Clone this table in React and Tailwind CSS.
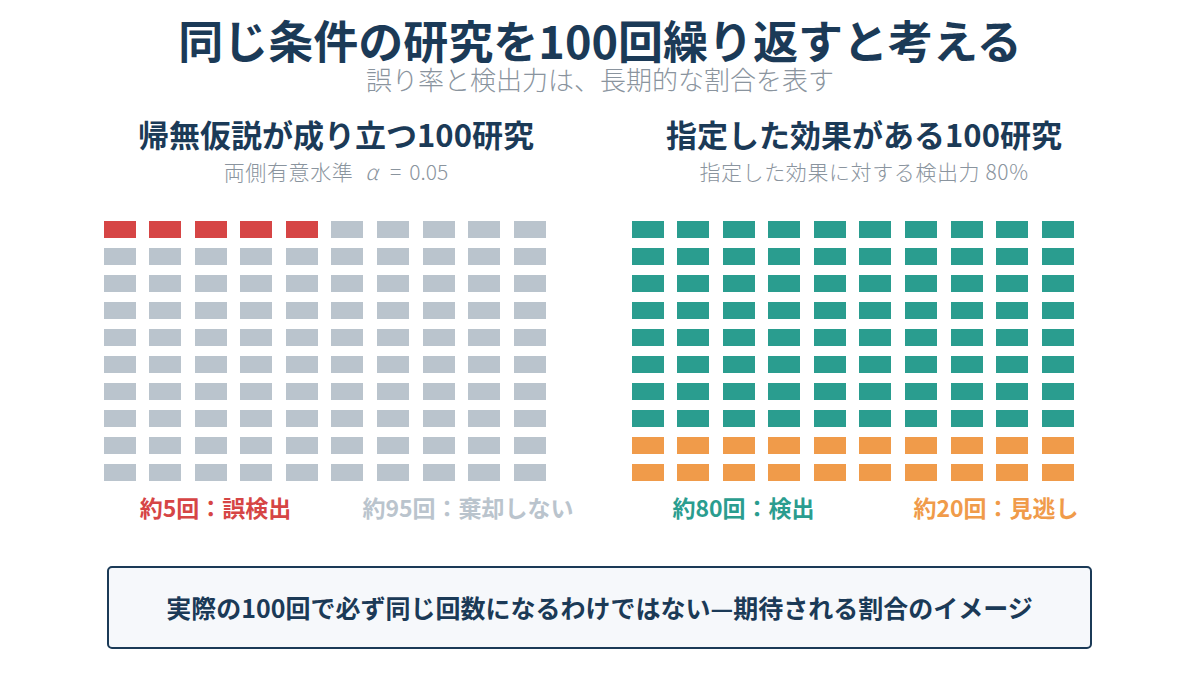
import React from "react";

const font = { fontFamily: '"Noto Sans CJK JP", "Noto Sans", sans-serif' };

function Cells({ colors }) {
  return (
    <div className="ml-[31.5px] grid w-[442.4px] grid-cols-[repeat(10,32px)] gap-x-[13.6px] gap-y-[10.3px]">
      {colors.map((c, i) => (
        <div key={i} className={`h-[16.7px] w-[32px] ${c}`} />
      ))}
    </div>
  );
}

export default function App() {
  const left = Array.from({ length: 100 }, (_, i) => (i < 5 ? "bg-[#d64545]" : "bg-[#bac4cd]"));
  const right = Array.from({ length: 100 }, (_, i) => (i < 80 ? "bg-[#2a9d8f]" : "bg-[#f09b4a]"));
  return (
    <div className="h-[675px] w-[1200px] overflow-hidden bg-white" style={font}>
      <div className="flex flex-col items-center pt-[17px]">
        <div className="text-[45px] font-bold leading-[45px] text-[#1b3a57] whitespace-nowrap">
          同じ条件の研究を100回繰り返すと考える
        </div>
        <div className="mt-[3.5px] text-[26px] font-light leading-[26px] text-[#8a949e] whitespace-nowrap">
          誤り率と検出力は、長期的な割合を表す
        </div>
      </div>
      <div className="ml-[72px] mt-[26.3px] grid w-[1056px] grid-cols-2">
        <div className="flex flex-col">
          <div className="text-center text-[31px] font-bold leading-[31px] text-[#1b3a57] whitespace-nowrap">
            帰無仮説が成り立つ100研究
          </div>
          <div className="mt-[12px] flex justify-center text-[21px] font-light leading-[21px] text-[#8a949e] whitespace-nowrap">
            <span className="tracking-[0.6px]">両側有意水準</span>
            <span className="ml-[12px] italic">α</span>
            <span className="ml-[12px]">=</span>
            <span className="ml-[8px]">0.05</span>
          </div>
          <div className="mt-[39.2px]">
            <Cells colors={left} />
          </div>
          <div className="mt-[15.5px] grid grid-cols-[287px_218px] text-[23px] font-semibold leading-[23px] whitespace-nowrap">
            <div className="text-center text-[#d64545]">約5回：誤検出</div>
            <div className="text-center text-[#bac4cd]">約95回：棄却しない</div>
          </div>
        </div>
        <div className="flex flex-col">
          <div className="text-center text-[31px] font-bold leading-[31px] text-[#1b3a57] whitespace-nowrap">
            指定した効果がある100研究
          </div>
          <div className="mt-[12px] text-center text-[21px] font-light leading-[21px] tracking-[0.6px] text-[#8a949e] whitespace-nowrap">
            指定した効果に対する検出力 80%
          </div>
          <div className="mt-[39.2px]">
            <Cells colors={right} />
          </div>
          <div className="mt-[15.5px] grid grid-cols-[287px_218px] text-[23px] font-semibold leading-[23px] whitespace-nowrap">
            <div className="text-center text-[#2a9d8f]">約80回：検出</div>
            <div className="text-center text-[#f09b4a]">約20回：見逃し</div>
          </div>
        </div>
      </div>
      <div className="ml-[107px] mt-[46.8px] flex h-[83px] w-[985px] items-center justify-center rounded-[5px] border-2 border-[#1b3a57] bg-[#f6f8fb]">
        <div className="text-[25px] font-bold leading-[25px] text-[#1b3a57] whitespace-nowrap">
          実際の100回で必ず同じ回数になるわけではない—期待される割合のイメージ
        </div>
      </div>
    </div>
  );
}
